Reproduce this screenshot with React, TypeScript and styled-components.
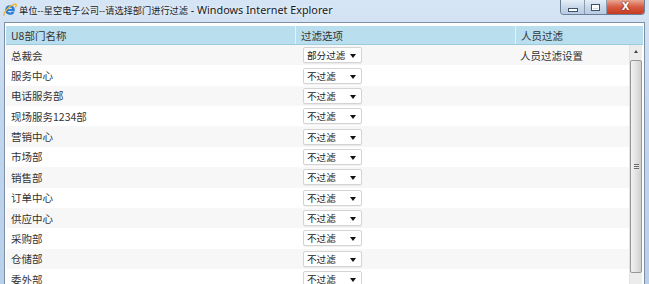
import styled, { createGlobalStyle } from 'styled-components';

const GlobalStyle = createGlobalStyle`
    html, body { margin: 0; padding: 0; background: #fff; }
    body { font-family: "Noto Sans", "Noto Sans CJK SC", sans-serif; }
`;

const Window = styled.div`
    display: flex;
    flex-direction: column;
    width: 649px;
    height: 284px;
    overflow: hidden;
    background: linear-gradient(180deg, #d6e5f5 0%, #c2d7ee 40%, #b9d0ea 100%);
`;

const TitleBar = styled.div`
    display: flex;
    align-items: flex-start;
    height: 22px;
    flex-shrink: 0;
`;

const TitleIcon = styled.div`
    display: flex;
    margin: 3px 0 0 3px;
    width: 14px;
    height: 14px;
`;

const TitleText = styled.div`
    flex: 1;
    margin: 2px 0 0 2px;
    font-family: "Noto Sans CJK SC", sans-serif;
    font-size: 9.2px;
    line-height: 15px;
    color: #1a1a1a;
    white-space: nowrap;
    text-shadow: 0 0 4px rgba(255, 255, 255, 0.9);
`;

const TitleLatin = styled.span`
    font-family: "Noto Sans", sans-serif;
    font-size: 10.8px;
`;

const Buttons = styled.div`
    display: flex;
    height: 14px;
    margin-right: 4px;
    border: 1px solid #6d7f96;
    border-top: none;
    border-radius: 0 0 4px 4px;
    overflow: hidden;
`;

const WinButton = styled.div<{ $w: number; $close?: boolean }>`
    display: flex;
    align-items: center;
    justify-content: center;
    width: ${p => p.$w}px;
    background: ${p => p.$close
        ? 'linear-gradient(180deg, #eaa896 0%, #d75a40 50%, #c43b20 100%)'
        : 'linear-gradient(180deg, #e6eef8 0%, #c9d8ea 50%, #b8cbe2 100%)'};
    border-left: 1px solid #8b9bb0;
    &:first-child { border-left: none; }
    color: #fff;
    font-family: "DejaVu Sans", sans-serif;
    font-weight: bold;
    font-size: 10px;
    line-height: 1;
    text-shadow: 0 0 2px #7a2010, 0 0 1px #7a2010;
`;

const MinGlyph = styled.div`
    width: 8px;
    height: 2px;
    margin-top: 5px;
    background: #fff;
    border: 1px solid #3e516a;
`;

const MaxGlyph = styled.div`
    width: 7px;
    height: 5px;
    border: 1px solid #3e516a;
    box-shadow: inset 0 0 0 1px #fff, inset 0 2px 0 1px #fff;
    background: #c9d8ea;
`;

const Client = styled.div`
    flex: 1;
    display: flex;
    flex-direction: column;
    margin: 0 4px;
    padding: 3px 1px 0;
    background: #fff;
    border: 1px solid #7d8fa6;
    border-bottom: none;
    min-height: 0;
`;

const HeaderRow = styled.div`
    display: grid;
    grid-template-columns: 289px 220px 1fr;
    height: 18px;
    flex-shrink: 0;
    background: #b9deee;
    border-bottom: 1px solid #9ccbe0;
`;

const HeaderCell = styled.div`
    display: flex;
    align-items: center;
    padding-left: 5px;
    font-family: "Noto Sans CJK SC", sans-serif;
    font-size: 10.5px;
    color: #333;
    border-left: 1px solid #e4f2f8;
    &:first-child { border-left: none; }
`;

const Body = styled.div`
    flex: 1;
    display: flex;
    min-height: 0;
`;

const Rows = styled.div`
    flex: 1;
    display: flex;
    flex-direction: column;
`;

const Row = styled.div<{ $odd: boolean }>`
    display: grid;
    grid-template-columns: 289px 220px 1fr;
    height: 20.36px;
    flex-shrink: 0;
    background: ${p => (p.$odd ? '#f7f7f7' : '#fff')};
`;

const Cell = styled.div`
    display: flex;
    align-items: center;
    padding-left: 5px;
    font-family: "Noto Sans CJK SC", sans-serif;
    font-size: 10.5px;
    color: #333;
    white-space: nowrap;
`;

const SelectBox = styled.div`
    position: relative;
    display: flex;
    align-items: center;
    width: 59px;
    height: 16px;
    margin-left: 3px;
    box-sizing: border-box;
    padding-left: 3px;
    background: #fff;
    border: 1px solid #d4d4d4;
    border-radius: 2px;
    box-shadow: 0 1px 1px rgba(0, 0, 0, 0.06);
    font-size: 9.6px;
    color: #222;
`;

const Caret = styled.span`
    position: absolute;
    right: 5px;
    top: 6px;
    width: 0;
    height: 0;
    border-left: 3px solid transparent;
    border-right: 3px solid transparent;
    border-top: 4px solid #111;
`;

const Scrollbar = styled.div`
    display: flex;
    flex-direction: column;
    width: 12px;
    flex-shrink: 0;
    margin-right: 1px;
    background: #ececec;
    border-left: 1px solid #e2e2e2;
`;

const ScrollArrow = styled.div`
    display: flex;
    align-items: center;
    justify-content: center;
    height: 13px;
    &::after {
        content: '';
        border-left: 2.5px solid transparent;
        border-right: 2.5px solid transparent;
        border-bottom: 3px solid #444;
    }
`;

const Thumb = styled.div`
    display: flex;
    align-items: center;
    justify-content: center;
    height: 213px;
    margin: 2px 0 0;
    box-sizing: border-box;
    border: 1px solid #979797;
    border-radius: 2px;
    background: linear-gradient(90deg, #f2f2f2 0%, #e2e2e2 50%, #cfcfcf 100%);
`;

const Grip = styled.div`
    width: 5px;
    height: 6px;
    background: repeating-linear-gradient(180deg, #6a6a6a 0 1px, #e8e8e8 1px 2px);
`;

const IeIcon = () => (
    <svg width="14" height="14" viewBox="0 0 14 14">
        <path d="M7 2.2 A4.8 4.8 0 1 0 11.6 8.4 H8.9 A2.3 2.3 0 0 1 4.8 8 H11.8 V7 A4.8 4.8 0 0 0 7 2.2 Z M4.9 6.1 A2.2 2.2 0 0 1 9.1 6.1 Z" fill="#2f7fd6" />
        <path d="M1.2 12.6 C-0.4 10.8 5 3.4 11 1.4 C13.4 0.6 14 2.4 12.2 4.4" fill="none" stroke="#f2b51e" strokeWidth="1.3" />
    </svg>
);

const depts: [string, string][] = [
    ['总裁会', '部分过滤'],
    ['服务中心', '不过滤'],
    ['电话服务部', '不过滤'],
    ['现场服务1234部', '不过滤'],
    ['营销中心', '不过滤'],
    ['市场部', '不过滤'],
    ['销售部', '不过滤'],
    ['订单中心', '不过滤'],
    ['供应中心', '不过滤'],
    ['采购部', '不过滤'],
    ['仓储部', '不过滤'],
    ['委外部', '不过滤'],
];

export default () => {
    return (
        <Window>
            <GlobalStyle />
            <TitleBar>
                <TitleIcon><IeIcon /></TitleIcon>
                <TitleText>单位--星空电子公司--请选择部门进行过滤<TitleLatin> - Windows Internet Explorer</TitleLatin></TitleText>
                <Buttons>
                    <WinButton $w={23}><MinGlyph /></WinButton>
                    <WinButton $w={21}><MaxGlyph /></WinButton>
                    <WinButton $w={37} $close>X</WinButton>
                </Buttons>
            </TitleBar>
            <Client>
                <HeaderRow>
                    <HeaderCell>U8部门名称</HeaderCell>
                    <HeaderCell>过滤选项</HeaderCell>
                    <HeaderCell>人员过滤</HeaderCell>
                </HeaderRow>
                <Body>
                    <Rows>
                        {depts.map(([name, opt], i) => (
                            <Row key={name} $odd={i % 2 === 0}>
                                <Cell>{name}</Cell>
                                <Cell>
                                    <SelectBox>
                                        {opt}
                                        <Caret />
                                    </SelectBox>
                                </Cell>
                                <Cell>{i === 0 ? '人员过滤设置' : ''}</Cell>
                            </Row>
                        ))}
                    </Rows>
                    <Scrollbar>
                        <ScrollArrow />
                        <Thumb><Grip /></Thumb>
                    </Scrollbar>
                </Body>
            </Client>
        </Window>
    );
};
